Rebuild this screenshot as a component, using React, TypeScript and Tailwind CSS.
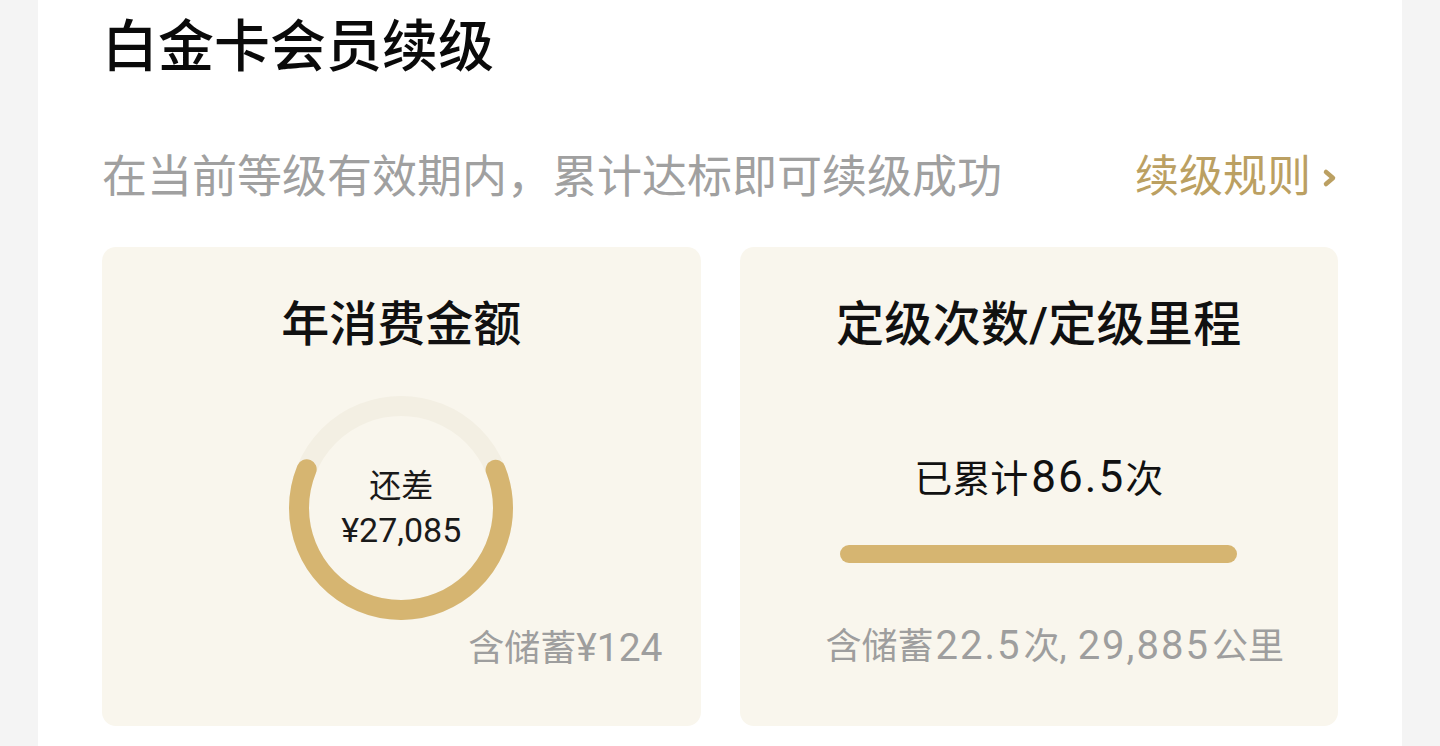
const font = { fontFamily: 'Roboto, "Noto Sans CJK SC", sans-serif' };

// digits in the screenshot sit a little larger than the CJK text around them
const Mixed = ({ text, numClass }: { text: string; numClass: string }) => (
  <>
    {text.split(/([¥0-9.,]+)/).map((part, i) =>
      /[¥0-9]/.test(part) ? (
        <span key={i} className={numClass}>
          {part}
        </span>
      ) : (
        <span key={i}>{part}</span>
      )
    )}
  </>
);

const Ring = () => {
  const r = 102;
  const c = 2 * Math.PI * r;
  const arc = (224 / 360) * c;
  return (
    <div className="relative w-[224px] h-[224px]">
      <svg width="224" height="224" viewBox="0 0 224 224" className="absolute inset-0">
        <circle cx="112" cy="112" r={r} fill="none" stroke="#f3efe3" strokeWidth="20" />
        <circle
          cx="112"
          cy="112"
          r={r}
          fill="none"
          stroke="#d6b571"
          strokeWidth="20"
          strokeLinecap="round"
          strokeDasharray={`${arc} ${c}`}
          transform="rotate(338 112 112)"
        />
      </svg>
      <div className="absolute inset-0 flex flex-col items-center justify-center text-[32px] leading-[44px] text-[#1a1a1a]">
        <span>还差</span>
        <span className="text-[34px]">¥27,085</span>
      </div>
    </div>
  );
};

export default function App() {
  return (
    <div className="w-full h-[746px] bg-[#f4f4f4] px-[38px]" style={font}>
      <div className="h-full bg-white px-[64px]">
        <h1 className="pt-[20px] text-[56px] leading-[55px] font-medium text-[#0a0a0a]">
          白金卡会员续级
        </h1>

        <div className="mt-[80px] flex items-center justify-between">
          <p className="text-[45px] leading-[45px] text-[#a0a0a0]">
            在当前等级有效期内，累计达标即可续级成功
          </p>
          <a className="flex items-center gap-[11px] text-[44px] leading-[45px] text-[#bba062]">
            续级规则
            <svg width="16" height="22" viewBox="0 0 16 22">
              <polyline
                points="4,5 11,11 4,17"
                fill="none"
                stroke="#bba062"
                strokeWidth="4.5"
                strokeLinecap="round"
                strokeLinejoin="round"
              />
            </svg>
          </a>
        </div>

        <div className="mt-[47px] grid grid-cols-2 gap-[39px]">
          <div className="h-[479px] rounded-[14px] bg-[#f9f6ed] pt-[54px] flex flex-col items-center">
            <h2 className="text-[48px] leading-[48px] font-medium text-[#111]">年消费金额</h2>
            <div className="mt-[47px]">
              <Ring />
            </div>
            <div className="mt-[10px] self-end pr-[38px] text-[36px] leading-[36px] text-[#9e9e9e]">
              <Mixed text="含储蓄¥124" numClass="text-[39px]" />
            </div>
          </div>

          <div className="h-[479px] rounded-[14px] bg-[#f9f6ed] pt-[54px] flex flex-col items-center">
            <h2 className="text-[48px] leading-[48px] font-medium text-[#111] tracking-[0.3px]">
              定级次数/定级里程
            </h2>
            <div className="mt-[109px] text-[38px] leading-[38px] text-[#111]">
              <Mixed text="已累计86.5次" numClass="text-[44px] tracking-[2px] pl-[3px]" />
            </div>
            <div className="mt-[47px] h-[18px] w-[397px] rounded-full bg-[#d6b571]" />
            <div className="mt-[65px] ml-[32px] text-[36px] leading-[36px] text-[#9e9e9e]">
              <Mixed text="含储蓄22.5次, 29,885公里" numClass="text-[40px] tracking-[2px] px-[2px]" />
            </div>
          </div>
        </div>
      </div>
    </div>
  );
}
